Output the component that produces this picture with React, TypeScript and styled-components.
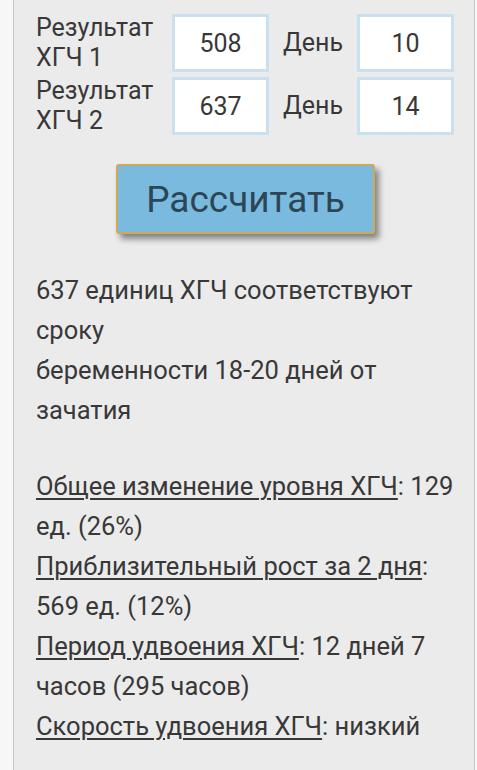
import React from "react";
import styled, { createGlobalStyle } from "styled-components";

const Global = createGlobalStyle`
  html, body {
    margin: 0;
    padding: 0;
    background: #f7f7f7;
  }
  body {
    font-family: Roboto, "Noto Sans", "Liberation Sans", sans-serif;
    color: #353535;
  }
`;

const Panel = styled.div`
  box-sizing: border-box;
  margin-left: 13px;
  width: 462px;
  min-height: 770px;
  background: #ebebeb;
  border-left: 1px solid #c6c6c6;
  border-right: 1px solid #c6c6c6;
  padding: 14px 17px 40px 22px;
`;

const Grid = styled.div`
  display: grid;
  grid-template-columns: 136px 97px 88px 97px;
  grid-auto-rows: 58px;
  row-gap: 5px;
  align-items: center;
`;

const Label = styled.div<{ $center?: boolean }>`
  font-size: 25px;
  line-height: 30px;
  text-align: ${(p) => (p.$center ? "center" : "left")};
  color: #383838;
  white-space: nowrap;
`;

const Field = styled.input`
  box-sizing: border-box;
  width: 97px;
  height: 58px;
  border: 3px solid #c9e0ee;
  background: #ffffff;
  text-align: center;
  font-family: Roboto, "Noto Sans", "Liberation Sans", sans-serif;
  font-size: 25px;
  color: #383838;
  padding: 0;
  outline: none;
`;

const ButtonRow = styled.div`
  display: flex;
  justify-content: center;
  margin-top: 29px;
  padding-right: 2px;
`;

const CalcButton = styled.button`
  box-sizing: border-box;
  width: 259px;
  height: 70px;
  background: #7bbadf;
  border: 2px solid #cfa955;
  border-radius: 3px;
  box-shadow: 4px 5px 6px rgba(0, 0, 0, 0.45);
  font-family: Roboto, "Noto Sans", "Liberation Sans", sans-serif;
  font-size: 37px;
  color: #2d4655;
  padding: 0;
  cursor: pointer;
`;

const Result = styled.p`
  margin: 36px 0 0;
  font-size: 25.5px;
  line-height: 40px;
  color: #383838;
`;

const Stats = styled.p`
  margin: 36px 0 0;
  font-size: 25.5px;
  line-height: 40px;
  color: #383838;
`;

const Term = styled.span`
  text-decoration: underline;
  text-decoration-thickness: 2px;
  text-underline-offset: 3px;
`;

export default function App() {
  return (
    <>
      <Global />
      <Panel>
        <Grid>
          <Label>
            Результат
            <br />
            ХГЧ 1
          </Label>
          <Field defaultValue="508" />
          <Label $center>День</Label>
          <Field defaultValue="10" />
          <Label>
            Результат
            <br />
            ХГЧ 2
          </Label>
          <Field defaultValue="637" />
          <Label $center>День</Label>
          <Field defaultValue="14" />
        </Grid>
        <ButtonRow>
          <CalcButton>Рассчитать</CalcButton>
        </ButtonRow>
        <Result>
          637 единиц ХГЧ соответствуют сроку
          <br />
          беременности 18-20 дней от зачатия
        </Result>
        <Stats>
          <Term>Общее изменение уровня ХГЧ</Term>: 129 ед. (26%)
          <br />
          <Term>Приблизительный рост за 2 дня</Term>: 569 ед. (12%)
          <br />
          <Term>Период удвоения ХГЧ</Term>: 12 дней 7 часов (295 часов)
          <br />
          <Term>Скорость удвоения ХГЧ</Term>: низкий
        </Stats>
      </Panel>
    </>
  );
}
